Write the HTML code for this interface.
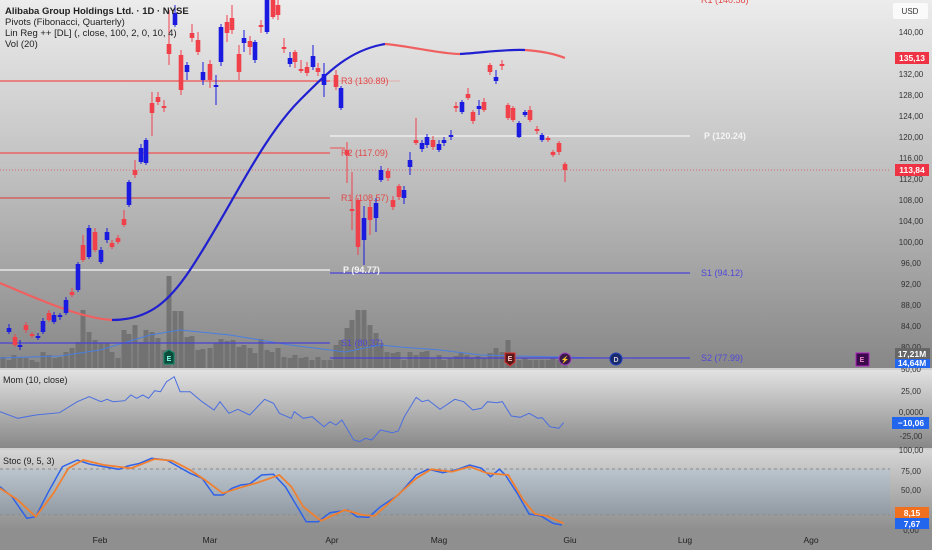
<!DOCTYPE html>
<html><head><meta charset="utf-8"><style>
html,body{margin:0;padding:0;width:932px;height:550px;overflow:hidden;font-family:"Liberation Sans",sans-serif}
svg{display:block}
</style></head><body>
<svg id="s" width="932" height="550" xmlns="http://www.w3.org/2000/svg" font-family="Liberation Sans, sans-serif">
<defs>
<linearGradient id="g1" x1="0" y1="0" x2="0" y2="1"><stop offset="0" stop-color="#ececec"/><stop offset="0.5" stop-color="#bdbdbd"/><stop offset="1" stop-color="#878787"/></linearGradient>
<linearGradient id="g2" x1="0" y1="0" x2="0" y2="1"><stop offset="0" stop-color="#e2e2e2"/><stop offset="1" stop-color="#878787"/></linearGradient>
<linearGradient id="g3" x1="0" y1="0" x2="0" y2="1"><stop offset="0" stop-color="#d6d6d6"/><stop offset="1" stop-color="#8e8e8e"/></linearGradient>
<linearGradient id="g4" x1="0" y1="0" x2="0" y2="1"><stop offset="0" stop-color="#b9c5d0"/><stop offset="1" stop-color="#8f9aa4"/></linearGradient>
</defs>
<rect x="0" y="0" width="932" height="368" fill="url(#g1)"/>
<rect x="0" y="368" width="932" height="2" fill="#d0d0d0"/>
<rect x="0" y="370" width="932" height="78" fill="url(#g2)"/>
<rect x="0" y="448" width="932" height="2" fill="#cfcfcf"/>
<rect x="0" y="450" width="932" height="80" fill="url(#g3)"/>
<rect x="0" y="469" width="890" height="46" fill="url(#g4)" opacity="0.8"/>
<line x1="0" y1="469" x2="890" y2="469" stroke="#777" stroke-dasharray="3,3" stroke-width="0.8"/>
<line x1="0" y1="515" x2="890" y2="515" stroke="#888" stroke-dasharray="3,3" stroke-width="0.8"/>
<rect x="0" y="530" width="932" height="20" fill="#8f8f8f"/>
<g id="vol" fill="#6e6e6e" opacity="0.85"></g>
<polyline fill="none" stroke="#4a7ee0" stroke-width="1" points="0,358 60,356 100,350 150,335 180,330 230,335 290,345 330,350 345,352 380,345 400,347 440,350 480,355 560,357 600,358"/>
<line x1="0" y1="81" x2="330" y2="81" stroke="#f05050" stroke-width="1.2"/>
<line x1="330" y1="81" x2="400" y2="81" stroke="#e8a0a0" stroke-width="0.8"/>
<line x1="0" y1="153" x2="330" y2="153" stroke="#f05050" stroke-width="1.2"/>
<line x1="0" y1="198" x2="330" y2="198" stroke="#d85050" stroke-width="1.2"/>
<line x1="0" y1="270" x2="330" y2="270" stroke="#f4f4f4" stroke-width="1.2"/>
<line x1="0" y1="343" x2="330" y2="343" stroke="#4a40d8" stroke-width="1.2"/>
<line x1="330" y1="136" x2="690" y2="136" stroke="#f4f4f4" stroke-width="1.2"/>
<line x1="330" y1="273" x2="690" y2="273" stroke="#4a40d8" stroke-width="1.2"/>
<line x1="330" y1="358" x2="690" y2="358" stroke="#4a40d8" stroke-width="1.2"/>
<line x1="330" y1="148" x2="345" y2="148" stroke="#f05050" stroke-width="1"/>
<line x1="0" y1="170" x2="890" y2="170" stroke="#e05050" stroke-width="0.8" stroke-dasharray="1,2"/>
<g font-size="9">
<text x="341" y="84" fill="#e04848">R3 (130.89)</text>
<text x="341" y="156" fill="#e04848">R2 (117.09)</text>
<text x="341" y="201" fill="#e04848">R1 (108.57)</text>
<text x="343" y="273" fill="#f4f4f4" font-weight="bold">P (94.77)</text>
<text x="341" y="346" fill="#5048d8">S1 (80.37)</text>
<text x="704" y="139" fill="#f4f4f4" font-weight="bold">P (120.24)</text>
<text x="701" y="276" fill="#5048d8">S1 (94.12)</text>
<text x="701" y="361" fill="#5048d8">S2 (77.99)</text>
<text x="701" y="3" fill="#e04848">R1 (140.58)</text>
</g>
<path d="M0,283 C40,300 80,318 112,320" fill="none" stroke="#f06060" stroke-width="2.2"/>
<path d="M112,320 C150,320 170,300 190,270 C230,210 260,140 300,100 C330,70 350,50 385,44" fill="none" stroke="#2020d0" stroke-width="2.2"/>
<path d="M385,44 C410,46 440,54 460,54" fill="none" stroke="#f06060" stroke-width="2.2"/>
<path d="M460,54 C480,53 505,49 525,50" fill="none" stroke="#2020d0" stroke-width="2.2"/>
<path d="M525,50 C540,51 555,54 565,58" fill="none" stroke="#f06060" stroke-width="2.2"/>
<g id="cand"></g>
<g font-size="7" font-weight="bold" text-anchor="middle">
<path d="M164,353 L169,350 L174,353 L174,364 L164,364Z" fill="#0c4a3a" stroke="#0a8a6a"/><text x="169" y="361" fill="#8fe">E</text>
<path d="M505,353 L515,353 L515,362 L510,366 L505,362Z" fill="#5a1a1a" stroke="#e03030"/><text x="510" y="361" fill="#fcc">E</text>
<circle cx="565" cy="359" r="6" fill="#3a1a4a" stroke="#a040c0"/><text x="565" y="362" fill="#e8c">⚡</text>
<circle cx="616" cy="359" r="6" fill="#1a2a6a" stroke="#2040c0"/><text x="616" y="362" fill="#ccd">D</text>
<rect x="856" y="353" width="13" height="13" fill="#3a0a4a" stroke="#b020c0"/><text x="862" y="362" fill="#e8c">E</text>
</g>
<polyline id="mom" fill="none" stroke="#4a6ee0" stroke-width="1"/>
<polyline id="k" fill="none" stroke="#2f62e8" stroke-width="1.5"/>
<polyline id="d" fill="none" stroke="#f08030" stroke-width="1.8"/>
<g font-size="9.5" fill="#222">
<text x="5" y="14" font-weight="bold">Alibaba Group Holdings Ltd. · 1D · NYSE</text>
<text x="5" y="25">Pivots (Fibonacci, Quarterly)</text>
<text x="5" y="36">Lin Reg ++ [DL] (, close, 100, 2, 0, 10, 4)</text>
<text x="5" y="47">Vol (20)</text>
<text x="3" y="383" font-size="9">Mom (10, close)</text>
<text x="3" y="464" font-size="9">Stoc (9, 5, 3)</text>
</g>
<rect x="893" y="3" width="35" height="16" fill="#fafafa" rx="2"/>
<text x="910" y="14" font-size="8" fill="#333" text-anchor="middle">USD</text>
<g font-size="8" fill="#333" text-anchor="middle" id="ax"></g>
<g font-size="8.5" font-weight="bold" fill="#fff" text-anchor="middle">
<rect x="895" y="52" width="34" height="12" fill="#ee3344"/><text x="912" y="61">135,13</text>
<rect x="895" y="164" width="34" height="12" fill="#ee3344"/><text x="912" y="173">113,84</text>
<rect x="895" y="348" width="35" height="11" fill="#666"/><text x="912" y="357">17,21M</text>
<rect x="895" y="359" width="35" height="9" fill="#2266ee"/><text x="912" y="366">14,64M</text>
<rect x="892" y="417" width="37" height="12" fill="#2266ee"/><text x="911" y="426">−10,06</text>
<rect x="895" y="507" width="34" height="11" fill="#f07020"/><text x="912" y="516">8,15</text>
<rect x="895" y="518" width="34" height="11" fill="#2266ee"/><text x="912" y="527">7,67</text>
</g>
<g font-size="8.5" fill="#222" text-anchor="middle">
<text x="100" y="543">Feb</text><text x="210" y="543">Mar</text><text x="332" y="543">Apr</text><text x="439" y="543">Mag</text><text x="570" y="543">Giu</text><text x="685" y="543">Lug</text><text x="811" y="543">Ago</text>
</g>
</svg>
<script>
var NS="http://www.w3.org/2000/svg";
function el(p,t,a){var e=document.createElementNS(NS,t);for(var k in a)e.setAttribute(k,a[k]);p.appendChild(e);return e;}
var C=[[9,'b',328,332,324,334],[15,'r',337,345,334,347],[20,'b',345,347,340,350],[26,'r',325,330,322,333],[32,'r',334,336,332,338],[38,'b',336,338,333,340],[43,'b',321,332,318,334],[49,'r',313,320,310,322],[54,'b',315,322,312,324],[60,'b',315,317,313,320],[66,'b',300,313,297,315],[72,'r',292,295,288,297],[78,'b',264,290,262,292],[83,'r',245,260,235,262],[89,'b',228,257,225,259],[95,'r',232,250,228,252],[101,'b',250,262,247,264],[107,'b',232,240,228,243],[112,'r',243,247,240,249],[118,'r',238,242,235,244],[124,'r',219,225,210,227],[129,'b',182,205,180,207],[135,'r',170,175,160,178],[141,'b',148,162,144,164],[146,'b',140,163,138,165],[152,'r',103,113,92,136],[158,'r',97,102,92,105],[164,'r',106,108,100,112],[169,'r',44,54,10,65],[175,'b',13,25,5,27],[181,'r',55,90,50,95],[187,'b',65,72,62,80],[192,'r',33,38,24,42],[198,'r',40,52,32,55],[203,'b',72,80,62,85],[210,'r',64,80,60,88],[216,'b',85,87,75,105],[221,'b',27,62,24,66],[227,'r',22,33,15,42],[232,'r',18,30,5,34],[239,'r',54,72,45,80],[244,'b',38,43,30,52],[250,'r',41,47,36,55],[255,'b',42,60,40,63],[261,'r',25,27,20,33],[267,'b',0,32,0,34],[273,'r',0,17,0,19],[278,'r',5,15,0,20],[284,'r',47,49,38,53],[290,'b',58,64,52,67],[295,'r',52,62,50,68],[301,'r',69,71,60,73],[307,'r',67,73,62,76],[313,'b',56,67,45,70],[318,'r',68,72,63,76],[324,'b',74,85,63,97],[336,'r',75,87,70,90],[341,'b',88,108,86,110],[347,'r',150,155,142,183],[352,'r',209,211,172,230],[358,'r',200,247,198,255],[364,'b',218,240,206,265],[370,'r',207,220,200,235],[376,'b',203,218,198,232],[381,'b',170,180,166,182],[388,'r',171,178,168,181],[393,'r',200,207,196,210],[399,'r',186,197,184,200],[404,'b',190,198,186,204],[410,'b',160,167,152,175],[416,'r',140,143,118,145],[422,'b',143,149,140,152],[427,'b',137,145,134,148],[433,'r',140,147,136,150],[439,'b',144,150,140,152],[444,'b',140,143,137,146],[451,'b',135,137,130,140],[456,'r',106,108,102,112],[462,'b',102,112,100,114],[468,'r',94,98,88,100],[473,'r',112,121,110,124],[479,'b',106,109,100,115],[484,'r',102,110,98,112],[490,'r',65,72,63,75],[496,'b',77,81,70,84],[502,'r',64,66,60,70],[508,'r',105,118,103,120],[513,'r',108,120,106,122],[519,'b',123,137,121,138],[525,'b',112,115,110,117],[530,'r',110,120,106,122],[537,'r',129,131,126,134],[542,'b',135,140,133,142],[548,'r',138,140,136,142],[553,'r',152,155,150,157],[559,'r',143,152,141,155],[565,'r',164,170,162,182]];
var g=document.getElementById('cand');
C.forEach(function(c){var col=c[1]=='r'?'#f0404a':'#1a1ae0';el(g,'line',{x1:c[0],x2:c[0],y1:c[4],y2:c[5],stroke:col,'stroke-width':1});el(g,'rect',{x:c[0]-2.3,y:c[2],width:4.6,height:Math.max(1.5,c[3]-c[2]),fill:col});});
var V=[[3,357],[9,360],[14,355],[20,358],[26,358],[32,360],[37,362],[43,352],[49,355],[55,358],[60,357],[66,352],[72,348],[78,342],[83,310],[89,332],[95,340],[101,343],[107,343],[112,352],[118,358],[124,330],[129,334],[135,325],[141,342],[146,330],[152,332],[158,338],[164,350],[169,276],[175,311],[181,311],[187,337],[192,336],[198,350],[203,349],[210,348],[216,343],[221,339],[227,341],[233,340],[239,347],[244,345],[250,348],[255,353],[261,339],[267,350],[272,352],[278,348],[284,357],[290,358],[295,355],[301,358],[306,357],[312,360],[318,357],[324,360],[330,360],[336,345],[341,340],[347,328],[352,320],[358,310],[364,310],[370,325],[376,333],[381,343],[387,352],[393,353],[398,352],[404,360],[410,352],[416,355],[422,352],[427,351],[433,358],[439,355],[444,360],[450,358],[456,356],[461,353],[467,355],[472,358],[478,356],[484,358],[490,353],[496,348],[502,352],[508,340],[513,355],[519,360],[525,358],[530,360],[536,360],[542,360],[548,360],[553,358],[559,360],[565,358]];
var vg=document.getElementById('vol');V.forEach(function(v){el(vg,'rect',{x:v[0]-2.5,y:v[1],width:5,height:368-v[1]});});
function pts(a){var s=[];for(var i=0;i<a.length;i+=2)s.push((a[i]/1.682).toFixed(1)+','+(a[i+1]/3+360).toFixed(1));return s.join(' ');}
document.getElementById('mom').setAttribute('points',pts([0,155,30,175,60,165,100,158,130,125,150,110,170,125,180,118,190,125,210,122,220,105,230,115,240,105,250,115,260,92,270,95,280,65,293,50,303,95,320,95,340,125,360,150,370,125,385,160,400,148,420,165,445,118,460,130,470,160,490,175,495,155,510,175,525,170,545,200,555,185,565,195,575,180,595,240,605,245,615,235,625,240,640,210,660,218,670,213,680,170,700,112,710,125,720,120,740,148,765,118,780,125,795,150,810,145,820,125,835,128,845,125,860,168,875,172,890,160,905,175,912,173,925,200,940,205,948,188]));
document.getElementById('k').setAttribute('points',pts([0,380,20,410,45,475,60,470,80,400,105,320,130,300,150,312,175,320,200,328,215,318,235,310,255,295,280,300,300,320,320,340,340,355,360,405,375,405,390,385,405,375,420,372,440,345,460,343,480,380,500,440,515,485,535,485,555,458,585,450,600,470,620,472,640,440,670,405,700,345,720,328,745,338,770,328,790,315,810,325,825,350,840,328,850,345,870,400,890,462,910,468,930,490,945,495]));
document.getElementById('d').setAttribute('points',pts([0,385,30,420,60,470,90,400,115,325,140,300,175,315,220,325,260,297,290,302,320,330,345,360,375,400,400,385,430,370,470,345,490,380,510,440,540,482,580,450,610,465,630,468,660,420,700,355,725,328,760,335,790,320,820,340,855,345,880,420,900,462,920,468,948,490]));
var ax=document.getElementById('ax');
for(var p=140;p>=80;p-=4){var y=32+(140-p)*21/4;if(p==136)continue;var t=el(ax,'text',{x:911,y:y+3});t.textContent=p+',00';}
[['50,00',372],['25,00',394],['0,0000',415],['-25,00',439],['100,00',453],['75,00',474],['50,00',493],['0,00',533]].forEach(function(a){var t=el(ax,'text',{x:911,y:a[1]});t.textContent=a[0];});
</script>
</body></html>
